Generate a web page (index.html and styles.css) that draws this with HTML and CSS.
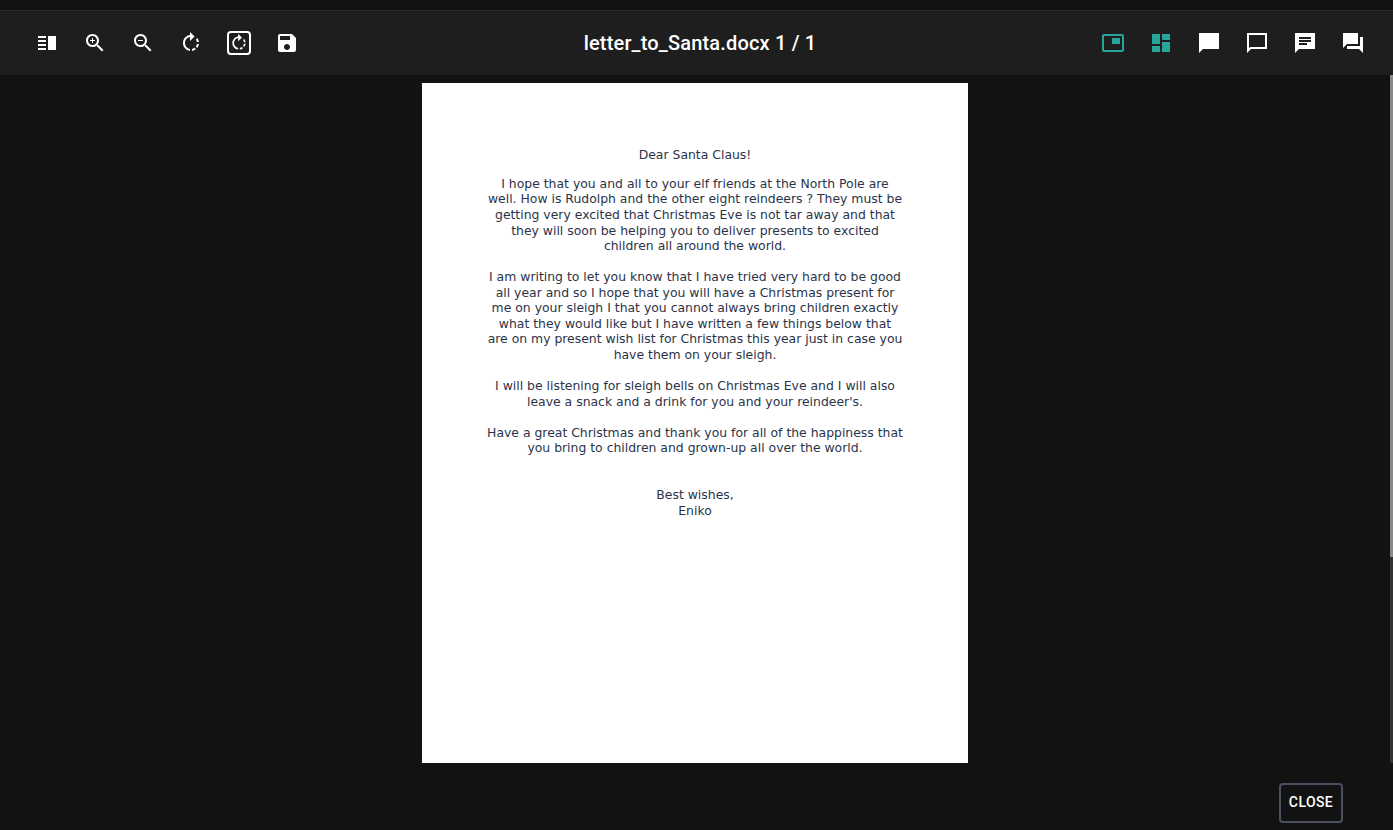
FILE: index.html
```html
<!DOCTYPE html>
<html lang="en">
<head>
<meta charset="utf-8">
<title>letter_to_Santa.docx</title>
<link rel="stylesheet" href="styles.css">
</head>
<body>
<header class="toolbar">
  <div class="tools">
    <svg class="icon" viewBox="0 0 24 24"><path d="M3 15h8v-2H3v2zm0 4h8v-2H3v2zm0-8h8V9H3v2zm0-6v2h8V5H3zm10 0h8v14h-8V5z"/></svg>
    <svg class="icon" viewBox="0 0 24 24"><path d="M15.5 14h-.79l-.28-.27C15.41 12.59 16 11.11 16 9.5 16 5.91 13.09 3 9.5 3S3 5.91 3 9.5 5.91 16 9.5 16c1.61 0 3.09-.59 4.23-1.57l.27.28v.79l5 4.99L20.49 19l-4.99-5zm-6 0C7.01 14 5 11.99 5 9.5S7.01 5 9.5 5 14 7.01 14 9.5 11.99 14 9.5 14zM12 10h-2v2H9v-2H7V9h2V7h1v2h2v1z"/></svg>
    <svg class="icon" viewBox="0 0 24 24"><path d="M15.5 14h-.79l-.28-.27C15.41 12.59 16 11.11 16 9.5 16 5.91 13.09 3 9.5 3S3 5.91 3 9.5 5.91 16 9.5 16c1.61 0 3.09-.59 4.23-1.57l.27.28v.79l5 4.99L20.49 19l-4.99-5zm-6 0C7.01 14 5 11.99 5 9.5S7.01 5 9.5 5 14 7.01 14 9.5 11.99 14 9.5 14zM7 9h5v1H7z"/></svg>
    <svg class="icon" viewBox="0 0 24 24"><path d="M15.55 5.55L11 1v3.07C7.06 4.56 4 7.92 4 12s3.05 7.44 7 7.93v-2.02c-2.84-.48-5-2.94-5-5.91s2.16-5.43 5-5.91V10l4.55-4.45zM19.93 11c-.17-1.39-.72-2.73-1.62-3.89l-1.42 1.42c.54.75.88 1.6 1.02 2.47h2.02zM13 17.9v2.02c1.39-.17 2.74-.71 3.9-1.61l-1.44-1.44c-.75.54-1.59.89-2.46 1.03zm3.89-2.42l1.42 1.41c.9-1.16 1.45-2.5 1.62-3.89h-2.02c-.14.87-.48 1.72-1.02 2.48z"/></svg>
    <svg class="icon boxed" viewBox="0 0 24 24"><path d="M15.55 5.55L11 1v3.07C7.06 4.56 4 7.92 4 12s3.05 7.44 7 7.93v-2.02c-2.84-.48-5-2.94-5-5.91s2.16-5.43 5-5.91V10l4.55-4.45zM19.93 11c-.17-1.39-.72-2.73-1.62-3.89l-1.42 1.42c.54.75.88 1.6 1.02 2.47h2.02zM13 17.9v2.02c1.39-.17 2.74-.71 3.9-1.61l-1.44-1.44c-.75.54-1.59.89-2.46 1.03zm3.89-2.42l1.42 1.41c.9-1.16 1.45-2.5 1.62-3.89h-2.02c-.14.87-.48 1.72-1.02 2.48z"/></svg>
    <svg class="icon" viewBox="0 0 24 24"><path d="M17 3H5c-1.11 0-2 .9-2 2v14c0 1.1.89 2 2 2h14c1.1 0 2-.9 2-2V7l-4-4zm-5 16c-1.66 0-3-1.34-3-3s1.34-3 3-3 3 1.34 3 3-1.34 3-3 3zm3-10H5V5h10v4z"/></svg>
  </div>
  <h1 class="title">letter_to_Santa.docx 1 / 1</h1>
  <div class="tools tools-end">
    <svg class="icon active" viewBox="0 0 24 24"><path d="M19 7h-8v6h8V7zm2-4H3c-1.1 0-2 .9-2 2v14c0 1.1.9 1.98 2 1.98h18c1.1 0 2-.88 2-1.98V5c0-1.1-.9-2-2-2zm0 16.01H3V4.98h18v14.03z"/></svg>
    <svg class="icon active" viewBox="0 0 24 24"><path d="M3 13h8V3H3v10zm0 8h8v-6H3v6zm10 0h8V11h-8v10zm0-18v6h8V3h-8z"/></svg>
    <svg class="icon" viewBox="0 0 24 24"><path d="M22 2H2.01L2 22l4-4h16V2z"/></svg>
    <svg class="icon" viewBox="0 0 24 24"><path d="M2 2v20l4-4h16V2H2zm18 14H5.2L4 17.2V4h16v12z"/></svg>
    <svg class="icon" viewBox="0 0 24 24"><path d="M22 2H2.01L2 22l4-4h16V2zM6 9h12v2H6V9zm8 5H6v-2h8v2zm4-6H6V6h12v2z"/></svg>
    <svg class="icon" viewBox="0 0 24 24"><path d="M22 6h-3v9H6v3h12l4 4V6zm-5 7V2H2v15l4-4h11z"/></svg>
  </div>
</header>
<main class="viewer">
  <div class="canvas">
    <article class="page">
      <p class="greeting">Dear Santa Claus!</p>
      <p>I hope that you and all to your elf friends at the North Pole are<br>well. How is Rudolph and the other eight reindeers ? They must be<br>getting very excited that Christmas Eve is not tar away and that<br>they will soon be helping you to deliver presents to excited<br>children all around the world.</p>
      <p>I am writing to let you know that I have tried very hard to be good<br>all year and so I hope that you will have a Christmas present for<br>me on your sleigh I that you cannot always bring children exactly<br>what they would like but I have written a few things below that<br>are on my present wish list for Christmas this year just in case you<br>have them on your sleigh.</p>
      <p>I will be listening for sleigh bells on Christmas Eve and I will also<br>leave a snack and a drink for you and your reindeer's.</p>
      <p>Have a great Christmas and thank you for all of the happiness that<br>you bring to children and grown-up all over the world.</p>
      <p class="signature">Best wishes,<br>Eniko</p>
    </article>
  </div>
  <div class="scrollbar"><div class="thumb"></div></div>
</main>
<footer class="actions"><button class="close">CLOSE</button></footer>
</body>
</html>
```
FILE: styles.css
```css
* { box-sizing: border-box; }
body {
  margin: 0;
  padding-top: 10px;
  height: 830px;
  overflow: hidden;
  background: #121212;
  color: #fff;
  font-family: Roboto, sans-serif;
}
.toolbar {
  display: flex;
  align-items: center;
  justify-content: space-between;
  height: 65px;
  padding: 0 28px 0 35px;
  background: #1e1e1e;
  border-top: 1px solid #2c2c2c;
}
.tools { display: flex; gap: 24px; width: 264px; }
.icon { display: block; width: 24px; height: 24px; fill: #fff; }
.boxed { border: 2px solid #fff; border-radius: 4px; }
.active { fill: #26a69a; }
.title {
  margin: 0;
  font-size: 20px;
  line-height: 32px;
  font-weight: 500;
  letter-spacing: 0.17px;
  white-space: nowrap;
}
.viewer { display: flex; height: 688px; }
.canvas { flex: 1; display: flex; justify-content: center; padding-top: 8px; }
.page {
  width: 546px;
  height: 680px;
  padding-top: 64.3px;
  background: #fff;
  color: #2c3349;
  font-family: "DejaVu Sans", sans-serif;
  font-size: 12.41px;
  line-height: 15.57px;
  text-align: center;
  white-space: nowrap;
}
.page p { margin: 0 0 15.57px; }
.page .greeting { margin-bottom: 13px; }
.page .signature { padding-top: 15.57px; }
.scrollbar { width: 3px; background: #333; }
.thumb { height: 482px; background: #888; }
.actions { display: flex; justify-content: flex-end; padding: 20px 50px 0; }
.close {
  width: 64px;
  height: 40px;
  padding: 0 0 2px;
  border: 2px solid #4a5060;
  border-radius: 4px;
  background: transparent;
  color: #fff;
  font: 500 14px/34px Roboto, sans-serif;
  letter-spacing: 0.4px;
}
```
